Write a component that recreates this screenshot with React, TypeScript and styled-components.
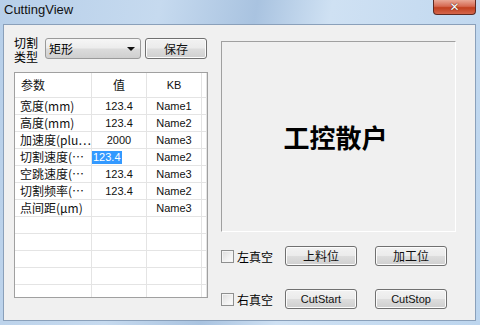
import React from 'react';
import styled, { createGlobalStyle } from 'styled-components';

const GlobalStyle = createGlobalStyle`
  html, body {
    margin: 0;
    padding: 0;
    background: #c9dcef;
  }
  body {
    font-family: "Liberation Sans", "Noto Sans CJK SC", sans-serif;
  }
`;

const Window = styled.div`
  width: 480px;
  height: 325px;
  display: flex;
  flex-direction: column;
  box-sizing: border-box;
  background: linear-gradient(
    100deg,
    #b7cfe9 0%,
    #c6daef 30%,
    #a9c3e0 48%,
    #cfe1f3 62%,
    #bcd5ee 100%
  );
  overflow: hidden;
`;

const TitleBar = styled.div`
  height: 24px;
  flex: 0 0 24px;
  display: flex;
  align-items: flex-start;
  justify-content: space-between;
  padding-left: 4px;
  padding-right: 4px;
`;

const Title = styled.span`
  font-size: 13px;
  line-height: 20px;
  color: #111;
`;

const CloseButton = styled.div`
  width: 43px;
  height: 15px;
  box-sizing: border-box;
  border: 1px solid #5e2a22;
  border-top: none;
  border-radius: 0 0 4px 4px;
  background: linear-gradient(#e9a896 0%, #d66a52 45%, #c1401f 55%, #d4664c 100%);
  display: flex;
  align-items: center;
  justify-content: center;
  color: #fff;
  font-family: "DejaVu Sans", sans-serif;
  font-weight: bold;
  font-size: 12px;
  line-height: 12px;
  text-shadow: 0 0 1px #5a1a10, 0 0 1px #5a1a10;
`;

const Client = styled.div`
  flex: 1;
  margin: 0 4px 4px 3px;
  border: 1px solid #8aa0ba;
  background: #f0f0f0;
  display: flex;
  gap: 13px;
  padding: 13px 0 0 10px;
  font-size: 12px;
  color: #000;
`;

const LeftColumn = styled.div`
  width: 194px;
  display: flex;
  flex-direction: column;
  gap: 13px;
`;

const TypeRow = styled.div`
  display: flex;
  align-items: center;
  height: 21px;
`;

const TypeLabel = styled.div`
  font-family: "Noto Sans CJK SC", sans-serif;
  font-size: 12px;
  line-height: 14px;
  width: 31px;
  margin-top: 3px;
`;

const Combo = styled.div`
  width: 96px;
  height: 21px;
  box-sizing: border-box;
  border: 1px solid #9a9a9a;
  border-radius: 3px;
  background: linear-gradient(#f6f6f6 0%, #ececec 48%, #dcdcdc 52%, #cfcfcf 100%);
  display: flex;
  align-items: center;
  justify-content: space-between;
  padding: 0 5px 0 3px;
  font-family: "Noto Sans CJK SC", sans-serif;
  font-size: 12px;
`;

const Arrow = styled.span`
  width: 0;
  height: 0;
  border-left: 4px solid transparent;
  border-right: 4px solid transparent;
  border-top: 4px solid #111;
`;

const Button = styled.button<{ $width: number; $latin?: boolean }>`
  width: ${(p) => p.$width}px;
  height: 20px;
  box-sizing: border-box;
  border: 1px solid #707070;
  border-radius: 3px;
  background: linear-gradient(#f2f2f2 0%, #ebebeb 48%, #dddddd 52%, #cfcfcf 100%);
  box-shadow: inset 0 0 0 1px #fcfcfc;
  padding: 0;
  font-family: ${(p) =>
    p.$latin ? '"Liberation Sans", sans-serif' : '"Noto Sans CJK SC", sans-serif'};
  font-size: ${(p) => (p.$latin ? 11 : 12)}px;
  line-height: 18px;
  color: #111;
`;

const SaveButton = styled(Button)`
  margin-left: 4px;
  height: 21px;
`;

const Table = styled.div`
  width: 194px;
  height: 226px;
  box-sizing: border-box;
  border: 1px solid #a0a0a0;
  background: #fff;
  overflow: hidden;
  display: grid;
  grid-template-columns: 77px 55px 55px 1fr;
  grid-template-rows: 25px;
  grid-auto-rows: 17px;
`;

const Cell = styled.div<{ $align?: 'left' | 'center'; $cjk?: boolean; $head?: boolean }>`
  box-sizing: border-box;
  border-right: 1px solid #e4e4e4;
  border-bottom: 1px solid #e4e4e4;
  display: flex;
  align-items: ${(p) => (p.$head ? 'flex-end' : 'center')};
  justify-content: ${(p) => (p.$align === 'left' ? 'flex-start' : 'center')};
  padding: ${(p) => (p.$head ? '0 0 5px 6px' : '0 0 0 5px')};
  ${(p) => (p.$align === 'left' ? '' : 'padding-left: 0;')}
  font-family: ${(p) =>
    p.$cjk ? '"Noto Sans CJK SC", sans-serif' : '"Liberation Sans", sans-serif'};
  font-size: ${(p) => (p.$cjk ? 12 : 11)}px;
  line-height: 14px;
  white-space: nowrap;
  overflow: hidden;
  color: #111;
`;

const EditCell = styled(Cell)`
  justify-content: flex-start;
  padding-left: 0;
`;

const Selected = styled.span`
  background: #3399ff;
  color: #fff;
  padding: 0 1px;
  line-height: 13px;
`;

const RightColumn = styled.div`
  width: 235px;
  display: flex;
  flex-direction: column;
  padding-top: 3px;
`;

const Preview = styled.div`
  height: 191px;
  box-sizing: border-box;
  border: 1px solid #fff;
  border-top-color: #a0a0a0;
  border-left-color: #a0a0a0;
  display: flex;
  align-items: center;
  justify-content: center;
  font-family: "Noto Sans CJK SC", sans-serif;
  font-weight: bold;
  font-size: 26px;
  padding-right: 6px;
`;

const ControlRow = styled.div<{ $top: number }>`
  display: flex;
  align-items: center;
  margin-top: ${(p) => p.$top}px;
  height: 20px;
`;

const CheckLabel = styled.label`
  display: flex;
  align-items: center;
  width: 64px;
  gap: 3px;
  font-family: "Noto Sans CJK SC", sans-serif;
  font-size: 12px;
`;

const CheckBox = styled.span`
  width: 13px;
  height: 13px;
  box-sizing: border-box;
  border: 1px solid #8e8f8f;
  background: linear-gradient(135deg, #dcdcdc 0%, #f2f2f2 60%, #fcfcfc 100%);
  box-shadow: inset 0 0 0 1px #f4f4f4;
`;

const ButtonGap = styled.span`
  width: 18px;
`;

type Row = { name: string; value: string; kb: string; editing?: boolean };

const rows: Row[] = [
  { name: '宽度(mm)', value: '123.4', kb: 'Name1' },
  { name: '高度(mm)', value: '123.4', kb: 'Name2' },
  { name: '加速度(plu…', value: '2000', kb: 'Name3' },
  { name: '切割速度(…', value: '123.4', kb: 'Name2', editing: true },
  { name: '空跳速度(…', value: '123.4', kb: 'Name3' },
  { name: '切割频率(…', value: '123.4', kb: 'Name2' },
  { name: '点间距(μm)', value: '', kb: 'Name3' },
];

const emptyRows = [0, 1, 2, 3, 4, 5];

const App: React.FC = () => {
  return (
    <>
      <GlobalStyle />
      <Window>
        <TitleBar>
          <Title>CuttingView</Title>
          <CloseButton>✕</CloseButton>
        </TitleBar>
        <Client>
          <LeftColumn>
            <TypeRow>
              <TypeLabel>
                切割
                <br />
                类型
              </TypeLabel>
              <Combo>
                矩形
                <Arrow />
              </Combo>
              <SaveButton $width={62}>保存</SaveButton>
            </TypeRow>
            <Table>
              <Cell $head $align="left" $cjk>
                参数
              </Cell>
              <Cell $head $cjk>
                值
              </Cell>
              <Cell $head>KB</Cell>
              <Cell $head />
              {rows.map((row) => (
                <React.Fragment key={row.name}>
                  <Cell $align="left" $cjk>
                    {row.name}
                  </Cell>
                  {row.editing ? (
                    <EditCell>
                      <Selected>{row.value}</Selected>
                    </EditCell>
                  ) : (
                    <Cell>{row.value}</Cell>
                  )}
                  <Cell>{row.kb}</Cell>
                  <Cell />
                </React.Fragment>
              ))}
              {emptyRows.map((i) => (
                <React.Fragment key={i}>
                  <Cell />
                  <Cell />
                  <Cell />
                  <Cell />
                </React.Fragment>
              ))}
            </Table>
          </LeftColumn>
          <RightColumn>
            <Preview>工控散户</Preview>
            <ControlRow $top={14}>
              <CheckLabel>
                <CheckBox />
                左真空
              </CheckLabel>
              <Button $width={72}>上料位</Button>
              <ButtonGap />
              <Button $width={72}>加工位</Button>
            </ControlRow>
            <ControlRow $top={23}>
              <CheckLabel>
                <CheckBox />
                右真空
              </CheckLabel>
              <Button $width={72} $latin>
                CutStart
              </Button>
              <ButtonGap />
              <Button $width={72} $latin>
                CutStop
              </Button>
            </ControlRow>
          </RightColumn>
        </Client>
      </Window>
    </>
  );
};

export default App;
